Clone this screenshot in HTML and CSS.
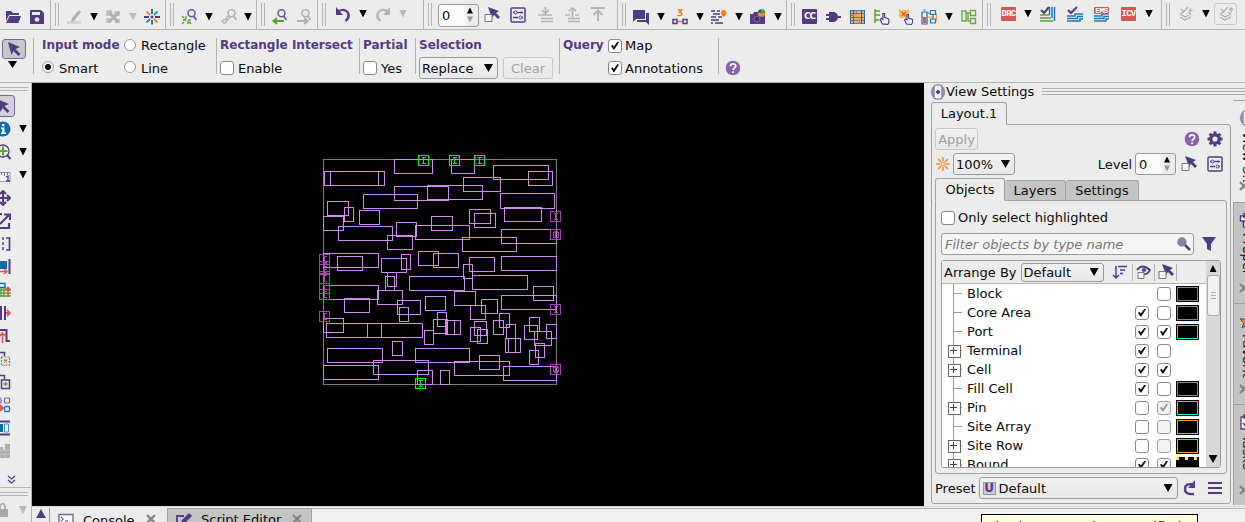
FILE: index.html
```html
<!DOCTYPE html>
<html lang="en">
<head>
<meta charset="utf-8">
<title>Layout viewer</title>
<link rel="stylesheet" href="styles.css">
</head>
<body>
<svg class="sprite" width="0" height="0">
  <symbol id="i-pick" viewBox="0 0 16 16"><path d="M2 1l12 5-4.500 2 5 5-2 2-5-5-2 4z" fill="#533b82"/></symbol>
  <symbol id="i-boxpick" viewBox="0 0 16 16"><path d="M4 0l11 4-3 2 4 4-2 2-4-4-2 3z" fill="#533b82"/><path d="M1 7.500h7v7H1z" fill="#f4f4f4" stroke="#777"/></symbol>
  <symbol id="i-set" viewBox="0 0 16 16"><rect x="1" y="1" width="14" height="14" rx="1" fill="none" stroke="#533b82" stroke-width="1.500"/><path d="M3 5.500h3M10 5.500h3M3 10.500h5M12 10.500h1" stroke="#533b82" stroke-width="1.300"/><circle cx="5.500" cy="5.500" r="1.500" fill="#ececec" stroke="#533b82"/><path d="M7 5.500h5" stroke="#533b82" stroke-width="1.300"/><circle cx="10.500" cy="10.500" r="1.500" fill="#ececec" stroke="#533b82"/></symbol>
  <symbol id="i-help" viewBox="0 0 16 16"><circle cx="8" cy="8" r="7.300" fill="#8963ae"/><path d="M5.500 6.300c0-3.300 5.200-3.200 5.200-.2 0 1.900-2.600 2-2.600 4" fill="none" stroke="#fff" stroke-width="1.700"/><path d="M7.200 11.300h1.800v1.800H7.200z" fill="#fff"/></symbol>
  <symbol id="i-view" viewBox="0 0 16 16"><path d="M4 3Q0 8 4 13M12 3q4 5 0 10" fill="none" stroke="#9a92b5" stroke-width="2.500"/><rect x="4" y="1" width="8" height="14" rx="2" fill="#f4f4f4" stroke="#7a6a9e" stroke-width="1.200"/><path d="M8 5.500L10.500 8 8 10.500 5.500 8z" fill="#533b82"/></symbol>
  <symbol id="i-x" viewBox="0 0 10 10"><path d="M1 1l8 8M9 1L1 9" stroke="#858585" stroke-width="2.400"/></symbol>
  <symbol id="i-hand" viewBox="0 0 10 12"><path d="M3 11L1 7l1-1 1.500 1V1.500h1.500V5l4 1.500v3L8 11.500z" fill="#f5f3f8" stroke="#533b82" stroke-width="1.100"/></symbol>
  <symbol id="i-mag" viewBox="0 0 12 12"><circle cx="6.500" cy="4.300" r="3.500" fill="none" stroke="currentColor" stroke-width="1.500"/><path d="M8.500 7l3 4" stroke="currentColor" stroke-width="1.800"/></symbol>
  <symbol id="pin" viewBox="0 0 11 11"><path d="M.5 .5h10v10H.5zM3.500 2.500h4M3.500 8.500h4M5.500 2.500v6" fill="none" stroke="currentColor"/></symbol>
</svg>

<div class="app">
  <header class="toolbar">
    <section class="group g-file">
      <svg class="ic" viewBox="0 0 16 16"><path d="M1 2h5l2 2h6v2H4L1 12z M4.500 7H16l-2.500 7H1z" fill="#533b82"/></svg>
      <svg class="ic" viewBox="0 0 16 16"><path d="M1 1h11l3 3v11H1z" fill="#533b82"/><path d="M3 3h8v3H3z" fill="#ececec"/><circle cx="8" cy="10.500" r="2.300" fill="#ececec"/></svg>
    </section>
    <section class="group g-edit">
      <i class="grip"></i>
      <svg class="ic" viewBox="0 0 16 16"><path d="M1 12h14v3H1z" fill="#d4d4d4"/><path d="M13 1l2 2-7 9-3 1 1-4z" fill="#b0b0b0"/></svg>
      <i class="dn"></i>
      <svg class="ic" viewBox="0 0 16 16"><path d="M1 1h6v6H1zM9 2h6v5H9zM1 9h5v5H1zM10 10h5v4h-5z" fill="#c6c6c6"/><path d="M4 3l9 10M14 3L4 13" stroke="#b0b0b0" stroke-width="3"/></svg>
      <i class="dn off"></i>
      <svg class="ic" viewBox="0 0 16 16" stroke-width="1.800"><path d="M8 0v5M8 11v4.500" stroke="#0b6cad"/><path d="M0 8h5M11 8h5" stroke="#533b82"/><path d="M2.500 2.500l3.500 3.500M10 10l3.500 3.500" stroke="#f08030"/><path d="M13.500 2.500L10 6M6 10l-3.500 3.500" stroke="#2f8fc5"/><circle cx="8" cy="8" r="1.500" fill="#533b82"/></svg>
    </section>
    <section class="group g-zoom">
      <i class="grip"></i>
      <svg class="ic" viewBox="0 0 16 16"><svg class="violet" x="4" width="12" height="12"><use href="#i-mag"/></svg><path d="M1 7l4 4M5 7v4H1M10 15l-3-4M7 15v-4h4M1 15l3-3" fill="none" stroke="#5a9e37" stroke-width="1.400" stroke-dasharray="3 1"/></svg>
      <i class="dn"></i>
      <svg class="ic gray" viewBox="0 0 16 16"><svg x="4" width="12" height="12"><use href="#i-mag"/></svg><path d="M8 6l-4 5q-2-1-3 1l2 2q3 0 2.500-2L9 8" fill="none" stroke="#b0b0b0" stroke-width="1.300"/></svg>
      <i class="dn"></i>
    </section>
    <section class="group g-hist">
      <i class="grip"></i>
      <svg class="ic violet" viewBox="0 0 16 16"><svg x="3" width="12" height="12"><use href="#i-mag"/></svg><path d="M12 12H2M5 9l-3.500 3L5 15" fill="none" stroke="#5a9e37" stroke-width="2"/></svg>
      <svg class="ic gray" viewBox="0 0 16 16"><svg x="3" width="12" height="12"><use href="#i-mag"/></svg><path d="M1 12h10M8 9l3.500 3L8 15" fill="none" stroke="#b0b0b0" stroke-width="2"/></svg>
    </section>
    <section class="group g-undo">
      <i class="grip"></i>
      <svg class="ic up" viewBox="0 0 16 16"><path d="M3 5.500Q9 2 12.500 6q3 5-2 9" fill="none" stroke="#533b82" stroke-width="2.400"/><path d="M1 1v8h7z" fill="#533b82"/></svg>
      <i class="dn up"></i>
      <svg class="ic up" viewBox="0 0 16 16"><path d="M13 5.500Q7 2 3.500 6q-3 5 2 9" fill="none" stroke="#b4b4b4" stroke-width="2.400"/><path d="M15 1v8H8z" fill="#b4b4b4"/></svg>
      <i class="dn off up"></i>
    </section>
    <section class="group g-level">
      <i class="grip"></i>
      <span class="spin">0<i class="steps"></i></span>
      <svg class="ic"><use href="#i-boxpick"/></svg>
      <svg class="ic"><use href="#i-set"/></svg>
      <svg class="ic" viewBox="0 0 16 16"><path d="M1 8h14M4 11.500h12M4 14.500h12M8.500 0v6M5 3l3.500 3.500L12 3" fill="none" stroke="#b4b4b4" stroke-width="1.700"/></svg>
      <svg class="ic" viewBox="0 0 16 16"><path d="M1 8h5M11 8h4M4 11.500h12M4 14.500h12M8.500 1v9M5 4l3.500-3L12 4" fill="none" stroke="#b4b4b4" stroke-width="1.700"/></svg>
      <svg class="ic" viewBox="0 0 16 16"><path d="M1 1h14M8 3v11M3.500 8L8 3.500 12.500 8" fill="none" stroke="#b4b4b4" stroke-width="1.900"/></svg>
    </section>
    <section class="group g-note">
      <i class="grip"></i>
      <svg class="ic" viewBox="0 0 16 16"><path d="M0 1h12v9H3l-3 3zM13 4h3v12l-3-3H4v-2h9z" fill="#533b82"/></svg>
      <i class="dn"></i>
      <svg class="ic" viewBox="0 0 16 16"><path d="M5.500 1h4l-2 2.200q2.500 0 2.300 2-.5 2-4.500 1" fill="none" stroke="#f47a20" stroke-width="1.500"/><path d="M3 12.500h10" stroke="#f47a20" stroke-width="1.500"/><path d="M1 10.500h4v4H1zM11 10.500h4v4h-4z" fill="#f4f4f4" stroke="#533b82" stroke-width="1.500"/></svg>
      <i class="dn"></i>
      <svg class="ic" viewBox="0 0 16 16"><path d="M0 2h4M6 2h3M2 5h7M0 8h5M7 8h4M0 11h8M4 14h8M0 14h2" stroke="#76669e" stroke-width="2"/><path d="M10 4q0-3 2.700-3T15.500 4q0 2-2.800 4Q10 6 10 4z" fill="#f47a20"/></svg>
      <i class="dn"></i>
      <svg class="ic" viewBox="0 0 16 16"><path d="M0 5h3l1-2h4v2h7v10H0z" fill="#533b82"/><circle cx="7" cy="10" r="3" fill="#41306b" stroke="#7868a0"/><circle cx="11.500" cy="4" r="3.800" fill="#e9912e"/><path d="M11.500 4V.2a3.800 3.800 0 013.800 3.800z" fill="#5a9e37"/><path d="M11.500 4V.2A3.800 3.800 0 007.700 4z" fill="#0b6cad"/></svg>
      <i class="dn"></i>
    </section>
    <section class="group g-tools">
      <i class="grip"></i>
      <span class="badge cc">CC</span>
      <svg class="ic" viewBox="0 0 16 16"><path d="M0 5h3V3h5q4 1 4 5t-4 5H3v-2H0V9h3V7H0zM12 7h3v2h-3z" fill="#533b82"/></svg>
      <svg class="ic crisp" viewBox="0 0 16 16"><path d="M0 1h15v14H0z" fill="#e2b184"/><path d="M0 1.500h15M0 4.500h15M0 8.500h15M0 11.500h15M0 14.500h15" stroke="#5178a3"/><path d="M.5 1v14M3.500 1v14M11.500 1v14M14.500 1v14" stroke="#35618f"/><path d="M5 5h3v3H5zM8 9h3v3H8z" fill="#f2a12e"/><path d="M6.500 1v3M9.500 11v4M1 6.500h3" stroke="#c96b56"/></svg>
      <svg class="ic" viewBox="0 0 16 16"><path d="M1 0v14M1 2h5M1 6h5M1 11h4" stroke="#5a9e37" stroke-width="1.500"/><svg x="5" y="3" width="11" height="13"><use href="#i-hand"/></svg></svg>
      <svg class="ic" viewBox="0 0 16 16"><path d="M1 1l3 1 2-1 2 1 3-1-1 4 1 4-4-1-4 1-2-2 1-3z" fill="#fbc94a" stroke="#f09a45" stroke-width=".7"/><path d="M3.500 3l4.500 4M8 3L3.500 7" stroke="#df5434" stroke-width="1.300"/><svg x="5" y="4" width="11" height="12"><use href="#i-hand"/></svg></svg>
      <svg class="ic" viewBox="0 0 16 16"><path d="M1 3h5v12H1zM2.500 1h2" fill="#eee" stroke="#35618f" stroke-width="1.200"/><path d="M2 8h3v6H2z" fill="#df5757"/><path d="M9.500 1.500h5v4h-5zM9.500 10h5v4h-5zM7 4h2M12 6v4" fill="none" stroke="#1978b5" stroke-width="1.200"/><path d="M15.500 4v8M7 8h5" stroke="#e89236"/></svg>
      <i class="dn"></i>
      <svg class="ic" viewBox="0 0 16 16"><path d="M1 2h4v10H1zM9.500 1.500h5v5h-5zM9.500 9.500h5v5h-5zM5 4h4M7 4v8h2" fill="none" stroke="#69a94a" stroke-width="1.400"/></svg>
    </section>
    <section class="group g-check">
      <i class="grip"></i>
      <span class="badge red">DRC</span>
      <i class="dn up"></i>
      <svg class="ic up" viewBox="0 0 16 16"><path d="M0 9h9M0 12h11M0 15h13" stroke="#5a9e37" stroke-width="1.500"/><path d="M9.500 1v8M12 1v11M14.500 1v14" stroke="#1978b5" stroke-width="1.500"/><path d="M1 4l3 3 5-6" fill="none" stroke="#533b82" stroke-width="2"/></svg>
      <svg class="ic up" viewBox="0 0 16 16"><path d="M0 10h8V8h8M0 12.500h10.500v-2H16M0 15h13v-2h3" fill="none" stroke="#1978b5" stroke-width="1.500"/><path d="M1 4l3 3 6-6" fill="none" stroke="#533b82" stroke-width="2"/></svg>
      <span class="ems"><span class="badge red small">EMS</span><svg width="15" height="8" viewBox="0 0 15 8"><path d="M0 2h8V0h7M0 4.500h10v-2h5M0 7h12V5h3" fill="none" stroke="#1978b5" stroke-width="1.400"/></svg></span>
      <span class="badge red">ICV</span>
      <i class="dn up"></i>
    </section>
    <section class="group g-stack">
      <i class="grip"></i>
      <svg class="ic up" viewBox="0 0 16 16" fill="none" stroke="#b0b0b0" stroke-width="1.300"><path d="M1 8l5 3 6-3M1 11l5 3 6-3M1 8l3-1.500M9 6.500L12 8"/><path d="M2 3l2.500 3L9 1M9.500 4.500h4M11.500 2.500v4"/></svg>
      <i class="dn up"></i>
      <span class="framed"><svg class="ic" viewBox="0 0 16 16" fill="none" stroke="#b0b0b0" stroke-width="1.300"><path d="M2 8l5 3 6-3M2 11l5 3 6-3M2 8l3-1.500M10 6.500L13 8"/><path d="M3 3l2.500 3L10 1M11 4l2-2 2 2M13 2v5"/></svg></span>
    </section>
  </header>

  <div class="options">
    <div class="opt tool"><span class="picked"><svg class="ic"><use href="#i-pick"/></svg></span><i class="dn wide"></i></div>
    <div class="opt mode"><b>Input mode</b><label><i class="radio"></i>Rectangle</label><label><i class="radio on"></i>Smart</label><label><i class="radio"></i>Line</label></div>
    <div class="opt inter"><b>Rectangle Intersect</b><label><i class="cb"></i>Enable</label></div>
    <div class="opt part"><b>Partial</b><label><i class="cb"></i>Yes</label></div>
    <div class="opt sel"><b>Selection</b><div class="line"><span class="select replace">Replace<i class="dn wide"></i></span><span class="btn clear">Clear</span></div></div>
    <div class="opt query"><b>Query</b><label><i class="cb on"></i>Map</label><span></span><label><i class="cb on"></i>Annotations</label></div>
    <div class="opt helpbox"><svg class="ic"><use href="#i-help"/></svg></div>
  </div>

  <aside class="left">
    <i class="hgrip"></i>
    <div class="lt"><span class="picked half"><svg class="ic"><use href="#i-pick"/></svg></span></div>
    <div class="lt"><svg class="ic" viewBox="0 0 16 16"><circle cx="8" cy="8" r="7.500" fill="#0b6cad"/><path d="M7 3h2.500v2.200H7zM6 6.500h3.500v5H11V13H6v-1.500h1.200V8H6z" fill="#fff"/></svg><i class="dn"></i></div>
    <div class="lt"><svg class="ic" viewBox="0 0 16 16"><circle cx="8" cy="7" r="6" fill="#eef5ea" stroke="#533b82" stroke-width="1.300"/><path d="M4 7h8.500M8 2.500v9" stroke="#5a9e37" stroke-width="2"/><path d="M12 11l3.500 4" stroke="#533b82" stroke-width="2"/></svg><i class="dn"></i></div>
    <div class="lt"><svg class="ic" viewBox="0 0 16 16"><path d="M0 5.500h15v9H0z" fill="#f4f4f4" stroke="#9a92b5"/><path d="M3.500 5v4M6.500 5v3M9.500 5v4M12.500 5v3" stroke="#76669e"/><path d="M11 10l2-1v5M11 14h4" fill="none" stroke="#533b82" stroke-width="1.300"/></svg><i class="dn"></i></div>
    <div class="lt"><svg class="ic" viewBox="0 0 16 16"><path d="M1 8h14M8 1v14M12 5l3 3-3 3M5 4l3-3 3 3M5 12l3 3 3-3" fill="none" stroke="#533b82" stroke-width="2"/></svg></div>
    <div class="lt"><svg class="ic" viewBox="0 0 16 16"><path d="M7 1H1v14h13V10M9 1.500h6V7M14 2L5 11" fill="none" stroke="#533b82" stroke-width="2.200"/></svg></div>
    <div class="lt"><svg class="ic" viewBox="0 0 16 16"><path d="M4 2H1v12h3M11 2h3.500v12H11" fill="none" stroke="#533b82" stroke-width="1.700"/><path d="M8 1v14" stroke="#533b82" stroke-width="1.500" stroke-dasharray="3 2"/></svg></div>
    <div class="lt"><svg class="ic" viewBox="0 0 16 16"><path d="M0 2h12v8H0z" fill="#0b6cad"/><path d="M14.500 0v15" stroke="#533b82" stroke-width="2"/><path d="M2 12.500h10M9 10l3 2.500L9 15" fill="none" stroke="#df5757" stroke-width="1.400"/></svg></div>
    <div class="lt"><svg class="ic" viewBox="0 0 16 16"><path d="M1 1.500h9v4H1z" fill="#fff" stroke="#0b6cad" stroke-width="1.500"/><path d="M1 8h15M1 11h15M1 14h15M6 6v9M9 6v9" stroke="#5a9e37" stroke-width="1.400"/><path d="M13 15V6M10.500 8L13 5.500 15.500 8" fill="none" stroke="#df5757" stroke-width="1.800"/></svg></div>
    <div class="lt"><svg class="ic" viewBox="0 0 16 16"><path d="M6 1v14M10 1v14" stroke="#533b82" stroke-width="2"/><path d="M1 8h4M11 8h4M12 5l3 3-3 3" fill="none" stroke="#df5757" stroke-width="1.800"/></svg></div>
    <div class="lt"><svg class="ic" viewBox="0 0 16 16"><path d="M1 2h10.500v11H15" fill="none" stroke="#533b82" stroke-width="2"/><path d="M7.500 15V5M5 8l2.500-3L10 8" fill="none" stroke="#df5757" stroke-width="1.600"/></svg></div>
    <div class="lt"><svg class="ic" viewBox="0 0 16 16"><path d="M1 1.500h8.500V5" fill="none" stroke="#533b82" stroke-width="1.600"/><path d="M6.500 6h8v8h-8z" fill="none" stroke="#5a9e37" stroke-width="1.200" stroke-dasharray="2 1"/><path d="M9 8.500l3 3M12 8.500l-3 3" stroke="#df5757" stroke-width="1.400"/></svg></div>
    <div class="lt"><svg class="ic" viewBox="0 0 16 16"><path d="M1 1.500h8.500V5M6.500 6h8v8.500h-8z" fill="none" stroke="#533b82" stroke-width="1.500"/><path d="M10.500 8v4M8.500 10h4" stroke="#5a9e37" stroke-width="1.500"/></svg></div>
    <div class="lt"><svg class="ic" viewBox="0 0 16 16"><rect x="1" y="1" width="5" height="5" rx="1" fill="none" stroke="#76669e" stroke-width="1.200"/><rect x="9.500" y="1" width="5" height="5" rx="1" fill="none" stroke="#76669e" stroke-width="1.200"/><rect x="9.500" y="9.500" width="5" height="5" rx="1" fill="none" stroke="#1978b5" stroke-width="1.300"/><path d="M2 11h6M5 8l3 3-3 3" fill="none" stroke="#df5757" stroke-width="1.800"/></svg></div>
    <div class="lt"><svg class="ic" viewBox="0 0 16 16"><path d="M0 1.500h15M0 14.500h15" stroke="#533b82" stroke-width="1.800"/><path d="M1 4h7v8H1z" fill="#0b6cad"/><path d="M9.500 4h4v8h-4z" fill="#fff" stroke="#2f9bd0"/></svg></div>
    <div class="lt"><svg class="ic" viewBox="0 0 16 16"><path d="M0 4h8v3h2V1h5v14H0z" fill="#acacac"/><path d="M0 7.500h15M0 11.500h15M5 4v11M10 4v11" stroke="#bdbdbd"/></svg></div>
    <svg class="more" viewBox="0 0 9 9"><path d="M1 1l3.500 3L8 1M1 5l3.500 3L8 5" fill="none" stroke="#533b82" stroke-width="1.300"/></svg>
    <div class="lockrow"><i class="hgrip"></i><div class="lt"><svg class="ic" viewBox="0 0 16 16"><path d="M5 7V4q3-5 5 0v3" fill="none" stroke="#a8a8a8" stroke-width="1.700"/><path d="M2 7h11v8H2z" fill="#a8a8a8"/></svg><i class="dn off"></i></div></div>
  </aside>

  <main class="canvas">
    <svg width="892" height="422" viewBox="32 83 892 422" class="crisp">
      <g transform="translate(.5 .5)" fill="none">
        <path d="M323 159H556V384H323z" stroke="#7f7f7f"/>
        <g class="cells">
          <path d="M324 171H384V185H324zM330 171V185M378 171V185M394 159H432V173H394zM394 186H448V200H394zM427 185H482V199H427zM363 194H417V208H363zM327 201H348V215H327zM344 207H353V221H344zM323 216H343V230H323zM359 210H379V224H359zM338 226H392V240H338zM396 222H416V236H396zM387 235H412V249H387zM431 216H452V230H431zM415 225H469V239H415z"/>
          <path d="M323 253H378V267H323zM337 256H362V270H337zM381 258H406V272H381zM401 254H410V269H401zM418 251H438V265H418zM433 253H458V267H433zM451 159H474V173H451zM493 165H548V179H493zM528 171H552V185H528zM463 177H500V191H463zM500 193H554V208H500zM504 207H541V221H504zM469 209H490V223H469zM474 213H495V227H474zM501 229H556V243H501zM462 237H516V251H462zM501 256H556V270H501zM469 257H494V271H469zM463 264H472V278H463z"/>
          <path d="M323 285H378V299H323zM385 276H394V290H385zM387 272H396V286H387zM409 276H464V290H409zM377 290H402V304H377zM344 298H369V312H344zM397 300H420V314H397zM399 307H408V321H399zM425 296H445V310H425zM323 318H343V332H323zM326 323H422V337H326zM367 323V337M381 323V337M424 330H433V344H424zM433 319H447V333H433zM437 312H446V326H437zM392 341H402V355H392zM327 348H382V362H327zM415 348H469V362H415zM373 360H428V374H373zM323 365H378V379H323zM417 370H432V384H417z"/>
          <path d="M472 275H527V289H472zM533 286H553V300H533zM454 291H475V305H454zM501 295H556V309H501zM481 299H497V313H481zM470 305H485V319H470zM445 320H454V334H445zM446 320H460V334H446zM499 313H509V327H499zM493 320H503V334H493zM506 324H515V338H506zM474 321H486V335H474zM470 327H480V341H470zM477 329H487V343H477zM505 338H520V352H505zM508 338V352M515 338V352M529 317H539V331H529zM524 325H537V339H524zM546 324H556V338H546zM534 331H551V345H534zM535 343H544V357H535zM529 350H538V364H529zM479 355H499V369H479zM454 361H509V375H454zM503 366H556V380H503zM440 370H449V384H440z"/>
        </g>
      </g>
      <g class="pin-in">
        <use href="#pin" x="418" y="155" width="11" height="11"/><use href="#pin" x="449" y="155" width="11" height="11"/><use href="#pin" x="474" y="155" width="11" height="11"/><use href="#pin" x="415" y="378" width="11" height="11"/>
      </g>
      <g class="pin-out">
        <use href="#pin" x="550" y="211" width="11" height="11"/><use href="#pin" x="550" y="229" width="11" height="11"/><use href="#pin" x="550" y="304" width="11" height="11"/><use href="#pin" x="550" y="364" width="11" height="11"/>
        <use href="#pin" x="319" y="254" width="11" height="11"/><use href="#pin" x="319" y="261" width="11" height="11"/><use href="#pin" x="319" y="264" width="11" height="11"/><use href="#pin" x="319" y="273" width="11" height="11"/><use href="#pin" x="319" y="283" width="11" height="11"/><use href="#pin" x="319" y="289" width="11" height="11"/><use href="#pin" x="319" y="311" width="11" height="11"/>
        <path d="M553 232.500h5v5h-5zM553 367.500h5v4h-5z" fill="none" stroke="currentColor"/>
      </g>
    </svg>
  </main>

  <aside class="dock">
    <div class="title"><svg class="ic"><use href="#i-view"/></svg><span>View Settings</span><i class="ridges"></i></div>
    <div class="view">
      <div class="tabs outer"><span class="tab cur">Layout.1</span></div>
      <div class="pane">
        <div class="row r1"><span class="btn">Apply</span><svg class="ic push"><use href="#i-help"/></svg><svg class="ic gear" viewBox="0 0 16 16"><path d="M8 .5v15M.5 8h15M2.700 2.700l10.600 10.600M13.300 2.700L2.700 13.300" stroke="#533b82" stroke-width="3"/><circle cx="8" cy="8" r="4.200" fill="#ececec" stroke="#533b82" stroke-width="3.200"/></svg></div>
        <div class="row r2"><svg class="sun" viewBox="0 0 14 14"><path d="M7 0v4M7 10v4M0 7h4M10 7h4M2 2l3 3M9 9l3 3M12 2L9 5M5 9l-3 3" stroke="#f78b3a" stroke-width="1.500"/><circle cx="7" cy="7" r="2" fill="none" stroke="#f78b3a"/></svg><span class="select pct">100%<i class="dn wide"></i></span><span class="push">Level</span><span class="spin">0<i class="steps"></i></span><svg class="ic"><use href="#i-boxpick"/></svg><svg class="ic last"><use href="#i-set"/></svg></div>
        <div class="tabs inner"><span class="tab cur">Objects</span><span class="tab">Layers</span><span class="tab">Settings</span></div>
        <div class="objects">
          <label class="only"><i class="cb"></i>Only select highlighted</label>
          <div class="filter"><span class="input">Filter objects by type name<svg width="16" height="16" viewBox="0 0 16 16"><circle cx="6" cy="6" r="4" fill="#8b80aa" stroke="#8b80aa" stroke-width="1.500"/><path d="M9 9l5 5" stroke="#533b82" stroke-width="2.500"/></svg></span><svg class="ic" viewBox="0 0 16 16"><path d="M1 1h14l-5 7v7l-4-2V8z" fill="#533b82"/></svg></div>
          <div class="tree">
            <div class="list">
              <div class="head"><span>Arrange By</span><span class="select def">Default<i class="dn wide"></i></span>
                <svg class="ic sort" viewBox="0 0 16 16"><path d="M4 2v12M1 11l3 3 3-3M6 2.500h9M8 6h5M8 9.500h3" fill="none" stroke="#533b82" stroke-width="1.500"/></svg>
                <span class="hcol"><svg class="ic" viewBox="0 0 16 16"><path d="M1 6q5-7 13 0-3 5-6 4" fill="none" stroke="#533b82" stroke-width="1.800"/><circle cx="8" cy="6" r="2" fill="#533b82"/><path d="M2 8.500h6v6H2z" fill="#f4f4f4" stroke="#777"/></svg></span><span class="hcol"><svg class="ic"><use href="#i-boxpick"/></svg></span><span class="hcol"></span></div>
              <div class="item"><i class="node"></i><span>Block</span><i></i><i class="cb"></i><i class="sw"></i></div>
              <div class="item"><i class="node"></i><span>Core Area</span><i class="cb on"></i><i class="cb"></i><i class="sw"></i></div>
              <div class="item"><i class="node"></i><span>Port</span><i class="cb on"></i><i class="cb on"></i><i class="sw cyan"></i></div>
              <div class="item"><i class="node plus"></i><span>Terminal</span><i class="cb on"></i><i class="cb"></i></div>
              <div class="item"><i class="node plus"></i><span>Cell</span><i class="cb on"></i><i class="cb on"></i></div>
              <div class="item"><i class="node"></i><span>Fill Cell</span><i class="cb on"></i><i class="cb"></i><i class="sw"></i></div>
              <div class="item"><i class="node plus"></i><span>Pin</span><i class="cb"></i><i class="cb on dim"></i><i class="sw cyan"></i></div>
              <div class="item"><i class="node"></i><span>Site Array</span><i class="cb"></i><i class="cb dim"></i><i class="sw orange"></i></div>
              <div class="item"><i class="node plus"></i><span>Site Row</span><i class="cb"></i><i class="cb dim"></i><i class="sw orange"></i></div>
              <div class="item"><i class="node plus"></i><span>Bound</span><i class="cb on"></i><i class="cb on"></i><i class="sw dash"></i></div>
            </div>
            <div class="scroll"><i class="upa"></i><i class="thumb"></i><i class="dn wide"></i></div>
          </div>
        </div>
        <div class="row preset"><span>Preset</span><span class="select pre"><i class="u">U</i>Default<i class="dn wide"></i></span><svg class="ic" viewBox="0 0 16 16"><path d="M11 4.500Q3 3 3 9t9 5" fill="none" stroke="#533b82" stroke-width="2.300"/><path d="M13 0v8H6z" fill="#533b82"/></svg><svg class="ic last" viewBox="0 0 16 16"><path d="M1 3h14M1 8h14M1 13h14" stroke="#533b82" stroke-width="2"/></svg></div>
      </div>
    </div>
  </aside>
  <nav class="side">
    <div class="vt cur"><svg class="ic"><use href="#i-view"/></svg><span>View S…</span><svg class="x"><use href="#i-x"/></svg></div>
    <div class="vt"><svg class="ic" viewBox="0 0 16 16"><path d="M5 1.500h10v4H5zM1.500 4h10v5h-10zM4.500 10h9v5h-9z" fill="#fff" stroke="#533b82" stroke-width="1.500"/></svg><span>Proper</span><svg class="x"><use href="#i-x"/></svg></div>
    <div class="vt"><svg class="ic" viewBox="0 0 16 16"><path d="M8 1l2 5h5l-4 4 2 5-5-3-5 3 2-5-4-4h5z" fill="#f78b3a" stroke="#533b82"/></svg><span>Favorit</span><svg class="x"><use href="#i-x"/></svg></div>
    <div class="vt"><svg class="ic" viewBox="0 0 16 16"><path d="M2 3h12v12H2zM5 1h6v3H5z" fill="#eee" stroke="#533b82" stroke-width="1.300"/><path d="M4 9l3 3 5-6" fill="none" stroke="#533b82" stroke-width="1.500"/></svg><span>Tasks</span><svg class="x"><use href="#i-x"/></svg></div>
  </nav>

  <footer class="bottom">
    <span class="expand"><i></i></span>
    <div class="btab cur"><svg class="ic" viewBox="0 0 16 16"><path d="M1 1.500h14v13H1z" fill="#f8f8f8" stroke="#76669e" stroke-width="1.400"/><path d="M3 4l2.500 2L3 8M7 8h3" fill="none" stroke="#533b82"/></svg><span>Console</span><svg class="x"><use href="#i-x"/></svg></div>
    <div class="btab"><svg class="ic" viewBox="0 0 16 16"><path d="M8 3H1v12h12V9" fill="none" stroke="#533b82" stroke-width="1.800"/><path d="M13 0l3 3-7 7-4 1 1-4z" fill="#533b82"/></svg><span>Script Editor</span><svg class="x"><use href="#i-x"/></svg></div>
    <div class="rest"></div>
  </footer>
  <div class="tip">check must settings specified</div>
</div>
</body>
</html>
```
FILE: styles.css
```css
* { box-sizing: border-box; }
body { margin: 0; overflow: hidden; background: #ececec; color: #0a0a0a; font: 13px/15px "DejaVu Sans", sans-serif; }
i { font-style: normal; }
svg { display: block; flex: none; }
.sprite { position: absolute; }
.crisp { shape-rendering: crispEdges; }
.violet { color: #6a55a0; }
.gray { color: #b0b0b0; }
.ic { width: 16px; height: 16px; }
.app {
  position: relative; width: 1245px; height: 522px; overflow: hidden;
  display: grid; grid-template: 30px 53px 423px 16px / 32px 892px 309px 12px;
}

/* small controls */
.dn { display: block; flex: none; width: 8px; height: 8px; background: #000; clip-path: polygon(0 0, 100% 0, 50% 100%); }
.dn.wide { width: 9px; }
.dn.off { background: #b8b8b8; }
.grip { width: 4px; height: 23px; border: solid #b4b4b4; border-width: 0 1px; align-self: start; margin-top: 3px; }
.cb { display: block; flex: none; width: 14px; height: 14px; border: 1px solid #898989; border-radius: 3px; background: #fff; }
.cb.on::after { content: ""; display: block; width: 8px; height: 8px; margin: 2px; background: #111; clip-path: polygon(0 52%, 18% 42%, 36% 62%, 82% 0, 100% 10%, 42% 100%, 30% 100%); }
.cb.dim { background: #f2f2f2; border-color: #a0a0a0; }
.cb.dim::after { background: #999; }
.radio { display: block; flex: none; width: 12px; height: 12px; border: 1px solid #969696; border-radius: 50%; background: #fff; }
.radio.on { background: radial-gradient(circle, #000 0 2.700px, #fff 3.300px); }
.select, .btn, .spin { display: flex; align-items: center; height: 22px; border: 1px solid #999; border-radius: 3px; background: linear-gradient(#f2f2f2, #e8e8e8); }
.select { justify-content: space-between; padding: 0 4px 0 2px; }
.btn { justify-content: center; color: #a0a0a0; border-color: #c8c8c8; }
.spin { width: 41px; justify-content: space-between; padding: 0 5px 0 3px; background: linear-gradient(90deg, #fafafa 60%, #ececec 75%); }
.steps { width: 6px; height: 15px; background: linear-gradient(#000 50%, #999 50%); clip-path: polygon(50% 0, 100% 40%, 0 40%, 0 60%, 100% 60%, 50% 100%, 0 60%, 0 40%); }
.push { margin-left: auto; }
.picked { display: flex; align-items: center; justify-content: center; width: 24px; height: 20px; border: 1px solid #76669e; border-radius: 3px; background: #c4c8c9; }

/* top toolbar */
.toolbar { grid-column: 1 / -1; display: flex; border-bottom: 1px solid #b4b4b4; }
.group { display: grid; align-items: center; padding-top: 4px; border-right: 1px solid #b4b4b4; flex: none; }
.group .grip { margin-top: -1px; }
.group .up { position: relative; top: -3px; }
.g-file { width: 51px; padding-left: 5px; grid-template-columns: 24px 16px; }
.g-edit { width: 115px; padding-left: 4px; grid-template-columns: 11px 24px 15px 24px 15px 16px; }
.g-zoom { width: 91px; padding-left: 4px; grid-template-columns: 11px 24px 16px 23px 8px; }
.g-hist { width: 61px; padding-left: 4px; grid-template-columns: 11px 24px 16px; }
.g-undo { width: 106px; padding-left: 4px; grid-template-columns: 13px 24px 16px 24px 8px; }
.g-level { width: 194px; padding-left: 4px; grid-template-columns: 10px 46px 26px 27px 27px 26px 16px; }
.g-level .spin { margin-top: -3px; height: 23px; }
.g-level .ic { margin-top: -3px; }
.g-note { width: 169px; padding-left: 4px; grid-template-columns: 11px 24px 15px 24px 15px 24px 15px 24px 8px; }
.g-tools { width: 196px; padding-left: 4px; grid-template-columns: 11px 24px 24px 24px 24px 23px 24px 16px 16px; }
.g-check { width: 179px; padding-left: 4px; grid-template-columns: 14px 23px 16px 27px 27px 27px 24px 8px; }
.g-stack { border: 0; padding-left: 4px; grid-template-columns: 13px 23px 12px 24px; }
.badge { width: 15px; height: 14px; border-radius: 1px; color: #fff; font: bold 9px/14px "Liberation Mono", monospace; text-align: center; display: flex; justify-content: center; letter-spacing: -.7px; }
.cc { height: 15px; background: #533b82; font: bold 9px/15px "DejaVu Sans", sans-serif; letter-spacing: -1px; }
.red { background: #d65555; margin-top: -5px; }
.small { height: 7px; line-height: 7px; margin: 0; font-size: 8px; }
.ems { margin-top: -5px; }
.framed { display: flex; align-items: center; justify-content: center; width: 23px; height: 22px; margin-top: -5px; border: 1px solid #c8c8c8; border-radius: 3px; }

/* selection options */
.options { grid-column: 1 / -1; display: flex; padding-top: 8px; border-bottom: 1px solid #b4b4b4; }
.opt { position: relative; display: grid; grid-template-rows: 15px 22px; row-gap: 4px; align-content: start; align-items: center; height: 36px; padding-left: 3px; border-left: 1px solid #b4b4b4; flex: none; }
.opt b { color: #533b82; white-space: nowrap; font-size: 12px; }
.opt label { display: flex; align-items: center; gap: 4px; }
.tool { width: 33px; border: 0; padding: 1px 0 0 2px; row-gap: 2px; grid-template-rows: 20px 7px; }
.tool .dn { margin-left: 6px; height: 7px; }
.mode { width: 183px; padding-left: 8px; grid-template-columns: 82px 1fr; }
.mode .radio { margin-top: -2px; }
.mode label { gap: 5px; }
.inter { width: 143px; }
.part { width: 56px; }
.sel { width: 144px; }
.line { display: flex; gap: 5px; }
.replace { width: 79px; }
.clear { width: 50px; }
.query { width: 159px; grid-template-columns: 45px 1fr; }
.query label { gap: 3px; }
.helpbox { width: 30px; padding-left: 6px; }
.helpbox svg { grid-row: 2; }

/* left tools */
.left { grid-row: 3 / 5; border-right: 1px solid #b4b4b4; overflow: hidden; }
.hgrip { display: block; width: 28px; height: 4px; border: solid #b4b4b4; border-width: 1px 0; }
.left > .hgrip { margin-top: 4px; margin-bottom: 3px; }
.lt { display: flex; align-items: center; height: 23px; padding-left: 19px; }
.lt .ic { margin-left: -24px; }
.lt .dn { margin-left: 8px; }
.half { margin-left: -28px; width: 24px; height: 22px; flex: none; background: #d2d0dc; }
.half .ic { margin: 0; }
.more { width: 9px; height: 9px; margin: 13px 0 0 7px; }
.lockrow { border-top: 1px solid #b4b4b4; margin-top: 3px; padding-top: 4px; }
.lockrow .lt { padding-top: 5px; }

.canvas { background: #000; overflow: hidden; }
.cells { stroke: #cd8bf0; }
.pin-in { color: #00ff00; }
.pin-out { color: #a445b2; }

/* view settings dock */
.dock { padding-left: 7px; display: flex; flex-direction: column; }
.title { display: flex; align-items: center; height: 17px; margin-right: -12px; }
.title .ic { margin-left: -1px; }
.ridges { flex: 1; height: 7px; margin-left: 8px; background: repeating-linear-gradient(#aaa 0 1px, #f2f2f2 1px 2px, #ececec 2px 3px); }
.view { width: 300px; padding-top: 2px; }
.tabs { display: flex; position: relative; z-index: 1; margin-bottom: -1px; align-items: flex-end; }
.tab { display: flex; align-items: center; justify-content: center; height: 21px; background: #c4c4c4; border: 1px solid #a0a0a0; border-left: 0; border-radius: 3px 3px 0 0; }
.tab.cur { background: #ececec; border-bottom-color: #ececec; border-left: 1px solid #a0a0a0; height: 23px; }
.outer .tab { width: 76px; }
.inner .tab.cur { width: 70px; }
.inner .tab { width: 61px; }
.inner .tab:last-child { width: 73px; }
.pane { height: 380px; border: 1px solid #a0a0a0; border-radius: 0 3px 3px 3px; padding: 3px 3px 0; }
.row { display: flex; align-items: center; height: 22px; }
.r1 .btn { width: 43px; }
.r1 .gear { margin: 0 4px 0 7px; }
.r2 { margin-top: 3px; }
.sun { width: 14px; height: 14px; margin: 0 3px 0 1px; }
.pct { width: 62px; }
.r2 .spin { margin: 0 5px 0 3px; }
.r2 .last { margin: 0 4px 0 10px; }
.inner { margin-top: 3px; }
.objects { width: 292px; height: 274px; border: 1px solid #a0a0a0; border-radius: 0 3px 3px 3px; padding: 9px 5px 0; }
.only { display: flex; align-items: center; gap: 3px; height: 15px; }
.filter { display: flex; align-items: center; gap: 7px; margin-top: 8px; }
.input { display: flex; align-items: center; justify-content: space-between; width: 253px; height: 22px; border: 1px solid #999; border-radius: 3px; background: #f5f5f5; color: #777; font-style: italic; padding: 0 1px 0 3px; }
.tree { display: flex; width: 280px; height: 208px; margin-top: 5px; border: 1px solid #999; border-radius: 3px; overflow: hidden; }
.list { width: 264px; background: #fff; overflow: hidden; }
.head { display: flex; align-items: center; height: 23px; background: #ececec; border-bottom: 1px solid #b4b4b4; padding-left: 2px; }
.def { width: 83px; height: 19px; margin-left: 4px; }
.sort { margin: 0 4px 0 8px; }
.hcol { width: 22px; height: 17px; padding-left: 3px; border-left: 1px solid #b4b4b4; flex: none; }
.item { display: grid; grid-template-columns: 25px 168px 22px 19px 23px; align-items: center; height: 19px; }
.item .sw { width: 23px; height: 16px; border: 1px solid #000; background: #000; box-shadow: inset 0 0 0 1px #888; }
.item .cyan { box-shadow: inset 0 0 0 1px #00f0f0; }
.item .orange { box-shadow: inset 0 0 0 1px #ffa010; }
.item .dash { background: repeating-linear-gradient(90deg, #ff0 0 3px, #000 3px 9px) 0 0 / 100% 3px no-repeat, #000; box-shadow: none; border: 0; }
.node { width: 20px; height: 19px; background: linear-gradient(#999, #999) 11px 0 / 1px 100% no-repeat, linear-gradient(#999, #999) 11px 9px / 10px 1px no-repeat; }
.plus::before { content: ""; display: block; width: 11px; height: 11px; margin: 4px 0 0 6px; border: 1px solid #666; background: linear-gradient(#444, #444) 4px 1px / 1px 7px no-repeat, linear-gradient(#444, #444) 1px 4px / 7px 1px no-repeat, #fff; }
.scroll { width: 14px; display: flex; flex-direction: column; align-items: center; background: #d8d8d8; padding: 4px 0; }
.upa { width: 7px; height: 7px; background: #000; clip-path: polygon(50% 0, 100% 100%, 0 100%); flex: none; }
.thumb { width: 13px; height: 41px; margin: 3px 0 auto; border: 1px solid #aaa; border-radius: 3px; background: repeating-linear-gradient(#aaa 0 1px, #f0f0f0 1px 3px) 3px 16px / 5px 7px no-repeat, #f0f0f0; }
.preset { margin-top: 3px; }
.pre { width: 199px; margin: 0 4px 0 3px; justify-content: flex-start; padding-left: 3px; }
.pre .dn { margin-left: auto; }
.u { display: flex; width: 13px; height: 13px; margin-right: 3px; align-items: center; justify-content: center; color: #533b82; background: #cfcad8; border: 1px solid #9a92b5; font-weight: bold; font-size: 12px; }
.preset .last { margin-left: 9px; }

/* vertical tabs */
.side { padding-top: 17px; overflow: hidden; }
.vt { height: 102px; width: 24px; padding: 9px 0 0 5px; border: 1px solid #a0a0a0; border-bottom: 0; background: #c4c4c4; overflow: hidden; }
.vt:nth-child(n+2) { height: 101px; }
.vt.cur { background: #ececec; border-left: 0; padding-left: 6px; }
.vt span { display: block; writing-mode: vertical-rl; height: 48px; margin-top: 5px; line-height: 16px; white-space: nowrap; }
.x { width: 10px; height: 10px; margin-top: 2px; }

/* bottom dock */
.bottom { grid-column: 2 / -1; display: flex; align-items: flex-end; border-top: 1px solid #d8d8d8; overflow: hidden; }
.expand { width: 18px; height: 14px; border-right: 1px solid #999; }
.expand i { display: block; width: 10px; height: 9px; margin: 1px 0 0 4px; background: #533b82; clip-path: polygon(50% 0, 100% 100%, 0 100%); }
.btab { display: flex; width: 145px; height: 14px; padding: 4px 0 0 8px; background: #c4c4c4; border: 1px solid #a0a0a0; border-bottom: 0; }
.btab.cur { width: 117px; background: #ececec; border: 0; padding-top: 5px; }
.btab span { margin: -1px 11px 0 9px; white-space: nowrap; }
.btab.cur span { margin-top: 0; }
.btab .x { margin-top: 1px; }
.rest { flex: 1; height: 14px; border-top: 1px solid #b4b4b4; background: #f0f0f0; }
.tip { position: absolute; left: 981px; top: 514px; width: 217px; height: 20px; border: 1px solid #000; background: #ffffdc; padding: 4px 6px; white-space: nowrap; }
```
